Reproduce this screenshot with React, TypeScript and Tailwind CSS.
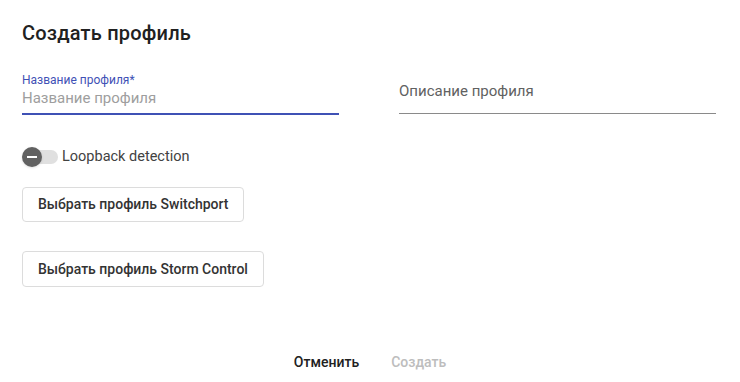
export default function App() {
  return (
    <div
      className="relative h-[382px] w-[740px] overflow-hidden bg-white text-[#212121]"
      style={{ fontFamily: 'Roboto, "Noto Sans", sans-serif' }}
    >
      <div className="px-[22px] pt-[20px]">
        <h1 className="text-[20px] font-medium leading-[26px] tracking-[0.2px]">Создать профиль</h1>

        <div className="mt-[27px] flex gap-[60px]">
          <div className="w-[317px]">
            <label className="block text-[12px] leading-[14px] text-[#3f51b5]">Название профиля*</label>
            <div className="mt-[2px] pb-[6px] text-[15px] leading-[18px] text-[#9e9e9e]">Название профиля</div>
            <div className="h-[2px] bg-[#3f51b5]" />
          </div>
          <div className="w-[317px]">
            <div className="pt-[9px] pb-[13px] text-[15px] leading-[18px] text-[#616161]">Описание профиля</div>
            <div className="h-px bg-[#8a8a8a]" />
          </div>
        </div>

        <div className="mt-[32px] flex items-center">
          <div className="relative h-[20px] w-[36px]">
            <div className="absolute left-[4px] top-[3px] h-[14px] w-[32px] rounded-full bg-[#e0e0e0]" />
            <div className="absolute left-0 top-0 flex h-[20px] w-[20px] items-center justify-center rounded-full bg-[#616161] shadow">
              <div className="h-[2px] w-[10px] bg-white" />
            </div>
          </div>
          <span className="ml-[4px] text-[14.5px] leading-[18px] text-[#424242]">Loopback detection</span>
        </div>

        <div className="mt-[20px] flex flex-col items-start gap-[29px]">
          <button className="h-[35px] rounded-[4px] border border-[#dcdcdc] px-[15px] text-[14px] font-medium text-[#333]">
            Выбрать профиль Switchport
          </button>
          <button className="h-[36px] rounded-[4px] border border-[#dcdcdc] px-[15px] text-[14px] font-medium text-[#333]">
            Выбрать профиль Storm Control
          </button>
        </div>
      </div>

      <div className="absolute bottom-[8px] left-0 right-0 flex justify-center gap-[32px]">
        <span className="text-[14px] font-medium leading-[24px] text-[#212121]">Отменить</span>
        <span className="text-[14px] font-medium leading-[24px] text-[#bdbdbd]">Создать</span>
      </div>
    </div>
  )
}
